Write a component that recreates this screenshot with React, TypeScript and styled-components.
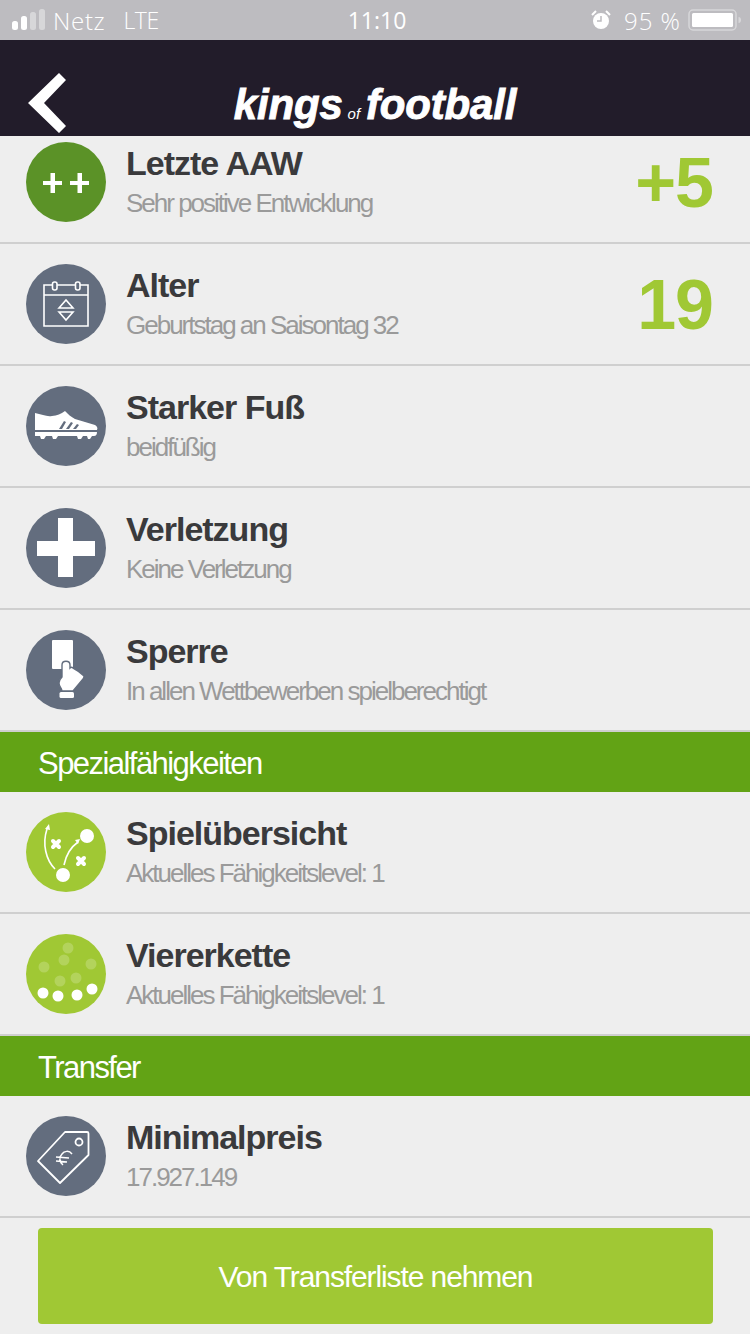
import React from 'react';
import styled, { createGlobalStyle } from 'styled-components';

const GlobalStyle = createGlobalStyle`
  html, body {
    margin: 0;
    padding: 0;
    background: #eeeeee;
    font-family: "Liberation Sans", Arial, sans-serif;
  }
`;

const Page = styled.div`
  width: 750px;
  height: 1334px;
  display: flex;
  flex-direction: column;
  overflow: hidden;
  background: #eeeeee;
`;

// Status bar
const StatusBar = styled.div`
  height: 40px;
  flex: none;
  display: grid;
  grid-template-columns: 1fr auto 1fr;
  align-items: center;
  padding: 0 8px 0 12px;
  background: #bdbcc0;
  color: #ffffff;
  font-family: "Open Sans", "Liberation Sans", sans-serif;
  font-size: 24px;
  font-weight: 300;
`;

const StatusLeft = styled.div`
  display: flex;
  align-items: center;
`;

const StatusRight = styled.div`
  display: flex;
  align-items: center;
  justify-content: flex-end;
`;

const Carrier = styled.span`
  margin-left: 8px;
  letter-spacing: 0.7px;
`;

const Network = styled.span`
  margin-left: 18px;
  font-size: 23px;
  letter-spacing: -0.4px;
`;

const Clock = styled.span`
  font-size: 23px;
  font-weight: 400;
`;

const Percent = styled.span`
  margin: 0 7px 0 13px;
  font-size: 24px;
  letter-spacing: 1px;
`;

// Nav bar
const NavBar = styled.header`
  height: 96px;
  flex: none;
  position: relative;
  display: flex;
  justify-content: center;
  align-items: flex-end;
  box-sizing: border-box;
  background: #221c2a;
`;

const BackButton = styled.button`
  position: absolute;
  left: 27px;
  top: 32px;
  display: flex;
  width: 40px;
  height: 62px;
  padding: 0;
  border: 0;
  background: none;
`;

const Logo = styled.div`
  display: flex;
  align-items: baseline;
  color: #ffffff;
  font-size: 42px;
  line-height: 44px;
  font-weight: 700;
  font-style: italic;
  letter-spacing: -0.2px;
  -webkit-text-stroke: 0.9px #ffffff;
`;

const LogoSmall = styled.span`
  margin: 0 6px 0 5px;
  font-size: 15px;
  font-weight: 400;
  letter-spacing: 0;
  -webkit-text-stroke: 0;
`;

// List
const Content = styled.main`
  flex: 1;
  min-height: 0;
  overflow: hidden;
`;

const List = styled.div`
  margin-top: -14px;
`;

const Row = styled.div`
  height: 122px;
  box-sizing: border-box;
  display: flex;
  align-items: flex-start;
  padding: 20px 37px 0 26px;
  border-bottom: 2px solid #cfcfcf;
`;

const IconCircle = styled.div<{ $tone: 'dark' | 'slate' | 'lime' }>`
  width: 80px;
  height: 80px;
  flex: none;
  display: flex;
  border-radius: 50%;
  background: ${({ $tone }) =>
    $tone === 'dark' ? '#5b9227' : $tone === 'lime' ? '#a0c834' : '#636d7e'};
`;

const RowText = styled.div`
  flex: 1;
  margin-left: 20px;
`;

const RowTitle = styled.div`
  color: #3a3a3c;
  font-size: 34px;
  line-height: 42px;
  font-weight: 700;
  letter-spacing: -1px;
`;

const RowSub = styled.div`
  margin-top: 1px;
  color: #9a9a9a;
  font-size: 26px;
  line-height: 36px;
  letter-spacing: -2px;
`;

const RowValue = styled.div`
  margin-top: 1px;
  color: #a0c834;
  font-size: 70px;
  line-height: 80px;
  font-weight: 700;
  letter-spacing: -1px;
`;

const SectionHeader = styled.div`
  height: 60px;
  box-sizing: border-box;
  padding-left: 38px;
  background: #62a315;
  color: #ffffff;
  font-size: 31px;
  line-height: 64px;
  letter-spacing: -1.55px;
`;

// Footer
const Footer = styled.footer`
  flex: none;
  padding: 10px 37px 10px 38px;
`;

const ActionButton = styled.button`
  display: block;
  width: 100%;
  height: 96px;
  padding: 2px 0 0;
  border: 0;
  border-radius: 4px;
  background: #a0c834;
  color: #ffffff;
  font-family: inherit;
  font-size: 30px;
  letter-spacing: -1.1px;
`;

const iconProps = { width: 80, height: 80, viewBox: '0 0 80 80' };

const PlusIcon = () => (
  <svg {...iconProps} fill="#fff">
    <path d="M17 39h7.500v-8h4.500v8H36v4h-7v8h-4.500v-8H17zM44 39h7.500v-8H56v8h7v4h-7v8h-4.500v-8H44z" />
  </svg>
);

const CalendarIcon = () => (
  <svg {...iconProps} fill="none" stroke="#fff" strokeWidth="1.600">
    <path d="M26 21h-8v41h44V21h-8M31 21h18M18 31h44" />
    <rect x="26.500" y="18" width="4.500" height="8" rx="2" />
    <rect x="49.500" y="18" width="4.500" height="8" rx="2" />
    <path d="M33 44l7-8 7 8zM33 48l7 8 7-8z" />
  </svg>
);

const BootIcon = () => (
  <svg {...iconProps} fill="#fff">
    <path d="M9 27l8 2c3 1 6 1.500 9 1 5-.5 9-2 13-5 3 3 6 6 10 8l20 6c2 1 3 3 2 5H9z" />
    <path d="M9 46h62c0 2.500-1 4-3 4H9z" />
    <path d="M14 50h6l-2 3h-3zM26 50h6l-2 3h-3zM51 50h6l-2 3h-3zM61 50h5l-2 3h-2z" />
    <path fill="#636d7e" d="M33 43l5-8 2 1-4 7zM40 43l5-7 2 1-4 6zM47 43l4-5 2 1-3 4z" />
  </svg>
);

const CrossIcon = () => (
  <svg {...iconProps} fill="#fff">
    <path d="M32 10h15v23h22v15H47v21H32V48H11V33h21z" />
  </svg>
);

const CardIcon = () => (
  <svg {...iconProps} fill="#fff">
    <rect x="26" y="10" width="21" height="29" rx="1" />
    <path
      stroke="#636d7e"
      strokeWidth="1.400"
      d="M36 47V35c0-5 8-5 8 0v3c1-1 2-1 3 0 4 2 8 5 11 8 0 1 0 2-1 3L47 61H36c0-3-3-4-3-8 0-3 1-4 3-6z"
    />
    <rect x="33.500" y="62" width="14.500" height="6" rx="1.500" />
  </svg>
);

const TacticsIcon = () => (
  <svg {...iconProps} fill="#fff">
    <circle cx="61" cy="24" r="7" />
    <circle cx="37" cy="63" r="7" />
    <path fill="none" stroke="#fff" strokeWidth="1.600" d="M29 57C20 48 16 32 21 17" />
    <path fill="none" stroke="#fff" strokeWidth="1.600" d="M38 53c2-10 7-18 14-23" />
    <path d="M19 17l4-5 1 6zM49 28l5-1-2 5z" />
    <path stroke="#fff" strokeWidth="4" strokeLinecap="round" d="M27 29l6 6M33 29l-6 6M52 46l6 6M58 46l-6 6" />
  </svg>
);

const FormationIcon = () => (
  <svg {...iconProps} fill="#fff">
    <g fillOpacity="0.2">
      <circle cx="42" cy="14" r="5.500" />
      <circle cx="38" cy="26" r="5.500" />
      <circle cx="18" cy="33" r="5.500" />
      <circle cx="65" cy="30" r="5.500" />
      <circle cx="34" cy="47" r="5.500" />
      <circle cx="50" cy="44" r="5.500" />
    </g>
    <circle cx="17" cy="59" r="5.500" />
    <circle cx="32" cy="62" r="5.500" />
    <circle cx="51" cy="61" r="5.500" />
    <circle cx="66" cy="55" r="5.500" />
  </svg>
);

const TagIcon = () => (
  <svg {...iconProps} fill="none" stroke="#fff" strokeWidth="1.800">
    <path strokeLinejoin="round" d="M12 45l27-29h22c1 0 1.500 .5 1.500 1.500V39L34 67z" />
    <circle cx="53" cy="26" r="3.500" />
    <path strokeWidth="1.500" d="M46 38c-3-4-8-3-10 0-3 3-3 8 1 11M30 41l13 1M30 45l11 1" />
  </svg>
);

const SignalBars = () => (
  <svg width="33" height="22" viewBox="0 0 33 22" fill="#fff">
    <rect x="0" y="12" width="6" height="9" rx="2.500" />
    <rect x="9" y="7" width="6" height="14" rx="2.500" />
    <rect x="18" y="3" width="6" height="18" rx="2.500" opacity="0.4" />
    <rect x="27" y="0" width="6" height="21" rx="2.500" opacity="0.4" />
  </svg>
);

const AlarmIcon = () => (
  <svg width="20" height="20" viewBox="0 0 20 20">
    <circle cx="10" cy="11" r="8" fill="#fff" />
    <path d="M1 5l4-4M15 1l4 4" stroke="#fff" strokeWidth="2" />
    <path d="M10 6v5H6" fill="none" stroke="#bdbcc0" strokeWidth="1.500" />
  </svg>
);

const BatteryIcon = () => (
  <svg width="54" height="22" viewBox="0 0 54 22">
    <rect x="1" y="1" width="47" height="20" rx="4" fill="none" stroke="#fff" strokeOpacity="0.4" strokeWidth="1.500" />
    <rect x="4" y="4" width="41" height="14" rx="1.500" fill="#fff" />
    <path d="M50.500 8c2 0 2.500 1.500 2.500 3s-.5 3-2.500 3z" fill="#fff" fillOpacity="0.4" />
  </svg>
);

const BackIcon = () => (
  <svg width="40" height="62" viewBox="0 0 40 62" fill="#fff">
    <path d="M32 1l7 7-22 23 22 23-7 7L1 31z" />
  </svg>
);

type RowData = {
  tone: 'dark' | 'slate' | 'lime';
  icon: React.ReactNode;
  title: string;
  sub: string;
  value?: string;
};

const playerRows: RowData[] = [
  { tone: 'dark', icon: <PlusIcon />, title: 'Letzte AAW', sub: 'Sehr positive Entwicklung', value: '+5' },
  { tone: 'slate', icon: <CalendarIcon />, title: 'Alter', sub: 'Geburtstag an Saisontag 32', value: '19' },
  { tone: 'slate', icon: <BootIcon />, title: 'Starker Fuß', sub: 'beidfüßig' },
  { tone: 'slate', icon: <CrossIcon />, title: 'Verletzung', sub: 'Keine Verletzung' },
  { tone: 'slate', icon: <CardIcon />, title: 'Sperre', sub: 'In allen Wettbewerben spielberechtigt' },
];

const skillRows: RowData[] = [
  { tone: 'lime', icon: <TacticsIcon />, title: 'Spielübersicht', sub: 'Aktuelles Fähigkeitslevel: 1' },
  { tone: 'lime', icon: <FormationIcon />, title: 'Viererkette', sub: 'Aktuelles Fähigkeitslevel: 1' },
];

const transferRows: RowData[] = [
  { tone: 'slate', icon: <TagIcon />, title: 'Minimalpreis', sub: '17.927.149' },
];

const renderRow = (row: RowData) => (
  <Row key={row.title}>
    <IconCircle $tone={row.tone}>{row.icon}</IconCircle>
    <RowText>
      <RowTitle>{row.title}</RowTitle>
      <RowSub>{row.sub}</RowSub>
    </RowText>
    {row.value && <RowValue>{row.value}</RowValue>}
  </Row>
);

const App: React.FC = () => {
  return (
    <Page>
      <GlobalStyle />
      <StatusBar>
        <StatusLeft>
          <SignalBars />
          <Carrier>Netz</Carrier>
          <Network>LTE</Network>
        </StatusLeft>
        <Clock>11:10</Clock>
        <StatusRight>
          <AlarmIcon />
          <Percent>95 %</Percent>
          <BatteryIcon />
        </StatusRight>
      </StatusBar>
      <NavBar>
        <BackButton aria-label="Zurück">
          <BackIcon />
        </BackButton>
        <Logo>
          kings<LogoSmall>of</LogoSmall>football
        </Logo>
      </NavBar>
      <Content>
        <List>
          {playerRows.map(renderRow)}
          <SectionHeader>Spezialfähigkeiten</SectionHeader>
          {skillRows.map(renderRow)}
          <SectionHeader>Transfer</SectionHeader>
          {transferRows.map(renderRow)}
        </List>
      </Content>
      <Footer>
        <ActionButton>Von Transferliste nehmen</ActionButton>
      </Footer>
    </Page>
  );
};

export default App;
